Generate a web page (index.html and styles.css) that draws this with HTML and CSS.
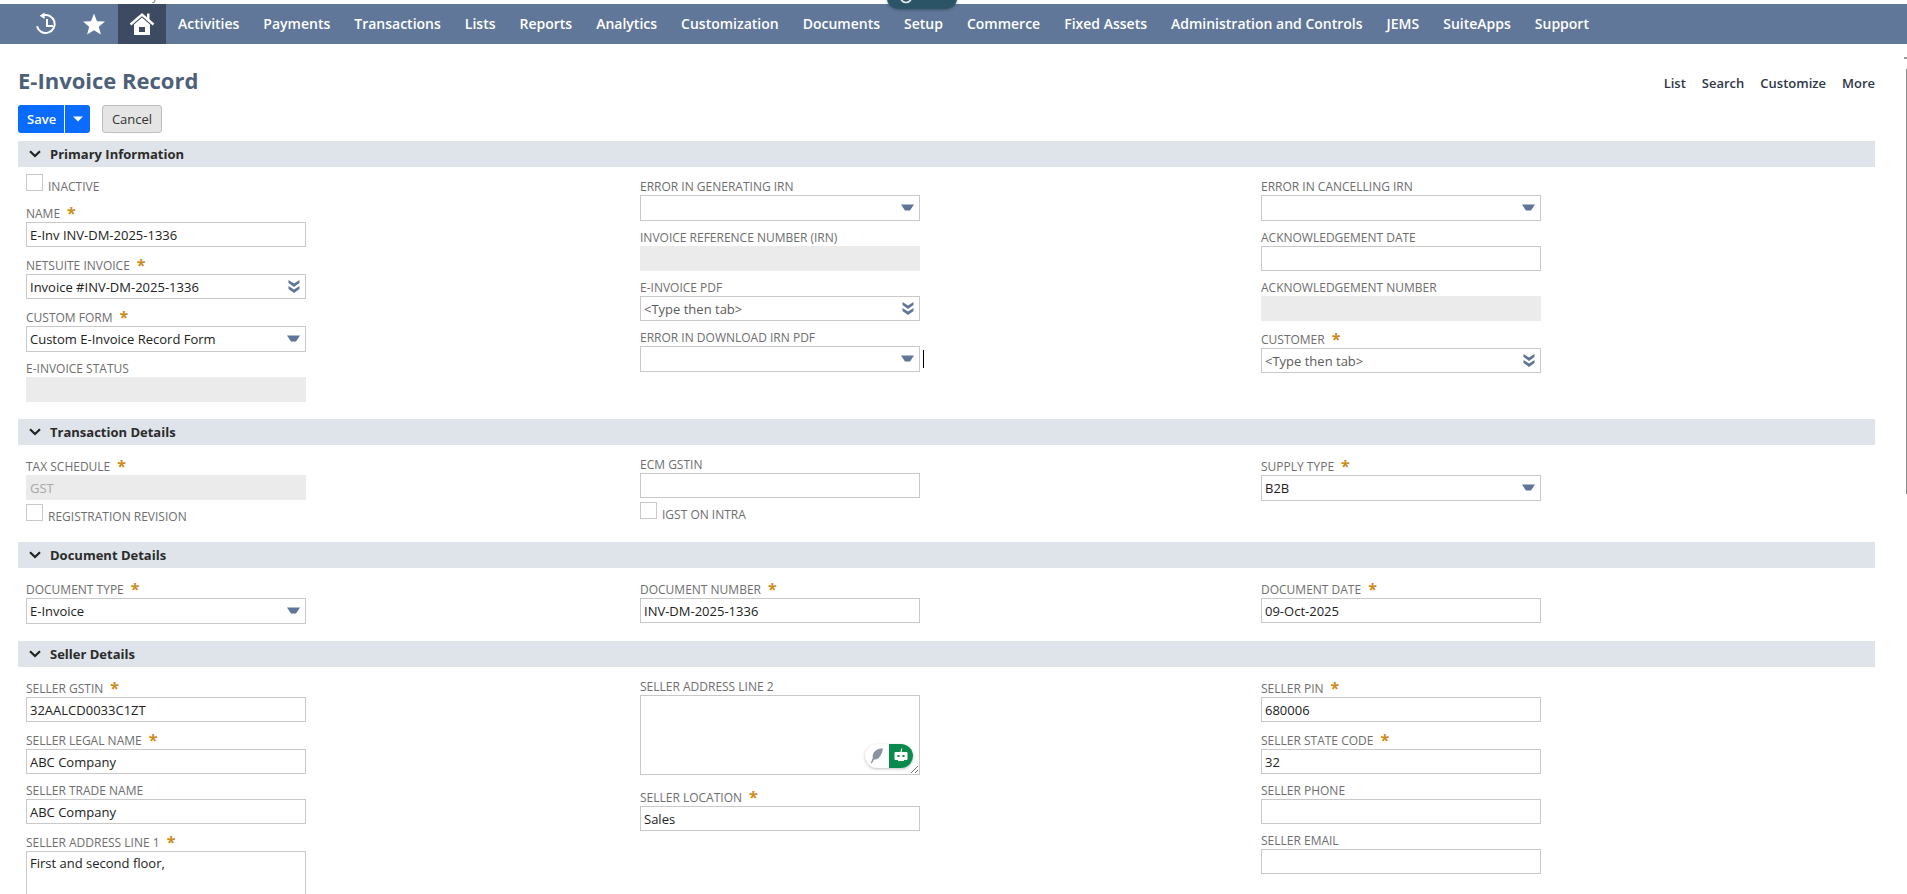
FILE: index.html
```html
<!DOCTYPE html>
<html lang="en">
<head>
<meta charset="utf-8">
<title>E-Invoice Record</title>
<link rel="stylesheet" href="styles.css">
</head>
<body>
<div class="peek-text">Dynamics</div>
<div class="peek-pill">
  <svg class="peek-ring" width="14" height="14" viewBox="0 0 14 14"><circle cx="7" cy="3" r="5.5" fill="none" stroke="#e8eef2" stroke-width="1.6"/></svg>
  <span class="peek-label">AI</span>
</div>
<div class="scroll-tick"></div>
<div class="scroll-thumb"></div>

<nav class="nav">
  <a class="nav-icon">
    <svg width="24" height="24" viewBox="0 0 24 24"><path d="M9 3.4A9 9 0 1 1 3 14.2" fill="none" stroke="#fff" stroke-width="2"/><path d="M10.6 .6V7L5.6 3.8Z" fill="#fff"/><path d="M13 7V14H19" fill="none" stroke="#fff" stroke-width="2"/></svg>
  </a>
  <a class="nav-icon">
    <svg width="24" height="24" viewBox="0 0 24 24"><path d="M12 1.5 15 9.2 23 9.6 16.8 14.8 18.9 22.6 12 18.2 5.1 22.6 7.2 14.8 1 9.6 9 9.2Z" fill="#fff"/></svg>
  </a>
  <a class="nav-icon nav-home">
    <svg width="26" height="24" viewBox="0 0 26 24"><path d="M1.5 12.5 13 2.5 24.5 12.5" fill="none" stroke="#fff" stroke-width="2.4"/><path d="M18 1.5H20.5V8H18Z" fill="#fff"/><path fill-rule="evenodd" d="M13 5.6 21 12.6V23H5V12.6ZM10 15V20H16V15Z" fill="#fff"/></svg>
  </a>
  <a class="nav-link">Activities</a>
  <a class="nav-link">Payments</a>
  <a class="nav-link">Transactions</a>
  <a class="nav-link">Lists</a>
  <a class="nav-link">Reports</a>
  <a class="nav-link">Analytics</a>
  <a class="nav-link">Customization</a>
  <a class="nav-link">Documents</a>
  <a class="nav-link">Setup</a>
  <a class="nav-link">Commerce</a>
  <a class="nav-link">Fixed Assets</a>
  <a class="nav-link">Administration and Controls</a>
  <a class="nav-link">JEMS</a>
  <a class="nav-link">SuiteApps</a>
  <a class="nav-link">Support</a>
</nav>

<header class="head">
  <h1 class="title">E-Invoice Record</h1>
  <div class="links"><a>List</a><a>Search</a><a>Customize</a><a>More</a></div>
</header>

<div class="actions">
  <div class="save">
    <span class="save-main">Save</span>
    <span class="save-arrow"><svg width="10" height="6" viewBox="0 0 10 6"><path d="M0 .5H10L5 5.5Z" fill="#fff"/></svg></span>
  </div>
  <div class="cancel">Cancel</div>
</div>

<section>
  <h2 class="bar"><svg class="chev" width="12" height="8" viewBox="0 0 12 8"><path d="M1 1.2 6 6 11 1.2" fill="none" stroke="#222" stroke-width="2.2"/></svg>Primary Information</h2>
  <div class="grid">
    <div class="col">
      <div class="check"><span class="box"></span><span class="check-text">INACTIVE</span></div>
      <div class="lab req">NAME<b>*</b></div>
      <div class="inp">E-Inv INV-DM-2025-1336</div>
      <div class="lab req">NETSUITE INVOICE<b>*</b></div>
      <div class="inp">Invoice #INV-DM-2025-1336<svg class="dbl" width="12" height="13" viewBox="0 0 12 13"><path d="M.5 0 6 3.5 11.5 0V3L6 7 .5 3ZM.5 6 6 9.5 11.5 6V9L6 13 .5 9Z" fill="#5f7699"/></svg></div>
      <div class="lab req">CUSTOM FORM<b>*</b></div>
      <div class="inp sel">Custom E-Invoice Record Form<svg class="tri" width="13" height="7" viewBox="0 0 13 7"><path d="M0 .5H13L9 6.5H4Z" fill="#5f7699"/></svg></div>
      <div class="lab">E-INVOICE STATUS</div>
      <div class="inp off"></div>
    </div>
    <div class="col">
      <div class="lab">ERROR IN GENERATING IRN</div>
      <div class="inp sel"><svg class="tri" width="13" height="7" viewBox="0 0 13 7"><path d="M0 .5H13L9 6.5H4Z" fill="#5f7699"/></svg></div>
      <div class="lab">INVOICE REFERENCE NUMBER (IRN)</div>
      <div class="inp off"></div>
      <div class="lab">E-INVOICE PDF</div>
      <div class="inp hint">&lt;Type then tab&gt;<svg class="dbl" width="12" height="13" viewBox="0 0 12 13"><path d="M.5 0 6 3.5 11.5 0V3L6 7 .5 3ZM.5 6 6 9.5 11.5 6V9L6 13 .5 9Z" fill="#5f7699"/></svg></div>
      <div class="lab">ERROR IN DOWNLOAD IRN PDF</div>
      <div class="inp sel"><svg class="tri" width="13" height="7" viewBox="0 0 13 7"><path d="M0 .5H13L9 6.5H4Z" fill="#5f7699"/></svg><span class="caret"></span></div>
    </div>
    <div class="col">
      <div class="lab">ERROR IN CANCELLING IRN</div>
      <div class="inp sel"><svg class="tri" width="13" height="7" viewBox="0 0 13 7"><path d="M0 .5H13L9 6.5H4Z" fill="#5f7699"/></svg></div>
      <div class="lab">ACKNOWLEDGEMENT DATE</div>
      <div class="inp"></div>
      <div class="lab">ACKNOWLEDGEMENT NUMBER</div>
      <div class="inp off"></div>
      <div class="lab req">CUSTOMER<b>*</b></div>
      <div class="inp hint">&lt;Type then tab&gt;<svg class="dbl" width="12" height="13" viewBox="0 0 12 13"><path d="M.5 0 6 3.5 11.5 0V3L6 7 .5 3ZM.5 6 6 9.5 11.5 6V9L6 13 .5 9Z" fill="#5f7699"/></svg></div>
    </div>
  </div>
</section>

<section>
  <h2 class="bar"><svg class="chev" width="12" height="8" viewBox="0 0 12 8"><path d="M1 1.2 6 6 11 1.2" fill="none" stroke="#222" stroke-width="2.2"/></svg>Transaction Details</h2>
  <div class="grid">
    <div class="col">
      <div class="lab req">TAX SCHEDULE<b>*</b></div>
      <div class="inp off muted">GST</div>
      <div class="check"><span class="box"></span><span class="check-text">REGISTRATION REVISION</span></div>
    </div>
    <div class="col">
      <div class="lab">ECM GSTIN</div>
      <div class="inp"></div>
      <div class="check"><span class="box"></span><span class="check-text">IGST ON INTRA</span></div>
    </div>
    <div class="col">
      <div class="lab req">SUPPLY TYPE<b>*</b></div>
      <div class="inp sel">B2B<svg class="tri" width="13" height="7" viewBox="0 0 13 7"><path d="M0 .5H13L9 6.5H4Z" fill="#5f7699"/></svg></div>
    </div>
  </div>
</section>

<section>
  <h2 class="bar"><svg class="chev" width="12" height="8" viewBox="0 0 12 8"><path d="M1 1.2 6 6 11 1.2" fill="none" stroke="#222" stroke-width="2.2"/></svg>Document Details</h2>
  <div class="grid">
    <div class="col">
      <div class="lab req">DOCUMENT TYPE<b>*</b></div>
      <div class="inp sel">E-Invoice<svg class="tri" width="13" height="7" viewBox="0 0 13 7"><path d="M0 .5H13L9 6.5H4Z" fill="#5f7699"/></svg></div>
    </div>
    <div class="col">
      <div class="lab req">DOCUMENT NUMBER<b>*</b></div>
      <div class="inp">INV-DM-2025-1336</div>
    </div>
    <div class="col">
      <div class="lab req">DOCUMENT DATE<b>*</b></div>
      <div class="inp">09-Oct-2025</div>
    </div>
  </div>
</section>

<section>
  <h2 class="bar"><svg class="chev" width="12" height="8" viewBox="0 0 12 8"><path d="M1 1.2 6 6 11 1.2" fill="none" stroke="#222" stroke-width="2.2"/></svg>Seller Details</h2>
  <div class="grid">
    <div class="col">
      <div class="lab req">SELLER GSTIN<b>*</b></div>
      <div class="inp">32AALCD0033C1ZT</div>
      <div class="lab req">SELLER LEGAL NAME<b>*</b></div>
      <div class="inp">ABC Company</div>
      <div class="lab">SELLER TRADE NAME</div>
      <div class="inp">ABC Company</div>
      <div class="lab req">SELLER ADDRESS LINE 1<b>*</b></div>
      <div class="inp area">First and second floor,</div>
    </div>
    <div class="col">
      <div class="lab">SELLER ADDRESS LINE 2</div>
      <div class="inp area">
        <div class="toggle">
          <span class="toggle-off"><svg width="14" height="16" viewBox="0 0 14 16"><path d="M13 .6C8.5 .2 3.2 2.6 2.6 8.4L2.8 10 .8 15 1.8 15.6 4 11.4C8.6 12.4 11.6 7.6 13 .6Z" fill="#8b93a3"/></svg></span>
          <span class="toggle-on"><svg width="16" height="16" viewBox="0 0 16 16"><path d="M8.8 .6 8 4.2" stroke="#fff" stroke-width="1.2"/><path fill-rule="evenodd" d="M2.5 4H13.5A1 1 0 0 1 14.5 5V11A1 1 0 0 1 13.5 12H11V13H5V12H2.5A1 1 0 0 1 1.5 11V5A1 1 0 0 1 2.5 4ZM4.5 7V9H6.5V7ZM9.5 7V9H11.5V7Z" fill="#fff"/></svg></span>
        </div>
        <svg class="grip" width="8" height="8" viewBox="0 0 8 8"><path d="M1 8 8 1M5 8 8 5" stroke="#777" stroke-width="1"/></svg>
      </div>
      <div class="lab req after-area">SELLER LOCATION<b>*</b></div>
      <div class="inp">Sales</div>
    </div>
    <div class="col">
      <div class="lab req">SELLER PIN<b>*</b></div>
      <div class="inp">680006</div>
      <div class="lab req">SELLER STATE CODE<b>*</b></div>
      <div class="inp">32</div>
      <div class="lab">SELLER PHONE</div>
      <div class="inp"></div>
      <div class="lab">SELLER EMAIL</div>
      <div class="inp"></div>
    </div>
  </div>
</section>
</body>
</html>
```

FILE: styles.css
```css
* { box-sizing: border-box; }
html, body { margin: 0; height: 894px; overflow: hidden; background: #fff; }
body { padding-top: 4px; font-family: "Open Sans", "Liberation Sans", sans-serif; font-size: 13px; color: #222; }

.peek-text { position: absolute; left: 143px; top: -10px; font-size: 11px; line-height: 12px; letter-spacing: 1px; color: #777; }
.peek-pill { position: absolute; z-index: 2; left: 887px; top: -6px; width: 70px; height: 15px; background: #2b5566; border-radius: 0 0 12px 12px / 0 0 10px 10px; box-shadow: 0 1px 3px rgba(0, 0, 0, .3); overflow: hidden; }
.peek-ring { position: absolute; left: 12px; top: 0; }
.peek-label { position: absolute; left: 38px; top: -7px; font-size: 11px; line-height: 14px; color: #e8eef2; }
.scroll-tick { position: absolute; right: 0; top: 57px; width: 3px; height: 2px; background: #999; }
.scroll-thumb { position: absolute; right: 0; top: 69px; width: 1px; height: 425px; background: #8d8d8d; }

.nav { display: flex; align-items: stretch; height: 40px; padding-left: 22px; background: #607799; }
.nav-icon { display: flex; width: 48px; align-items: center; justify-content: center; }
.nav-home { background: #3c4a62; }
.nav-link { display: flex; align-items: center; padding: 0 12px; color: #fff; font-size: 14px; font-weight: 600; line-height: 20px; white-space: nowrap; }

.head { display: flex; justify-content: space-between; align-items: center; padding: 22px 32px 0 18px; }
.title { margin: 0; font-size: 22px; line-height: 28px; font-weight: 700; color: #4d5f79; }
.links { display: flex; gap: 16px; margin-top: 6px; font-size: 13px; font-weight: 600; line-height: 18px; color: #2d3748; }

.actions { display: flex; gap: 12px; height: 28px; margin: 11px 0 8px 18px; }
.save { display: flex; width: 72px; border-radius: 3px; overflow: hidden; background: #0a6cff; color: #fff; font-weight: 600; line-height: 28px; }
.save-main { width: 47px; padding-left: 9px; border-right: 1px solid #fff; }
.save-arrow { display: flex; flex: 1; align-items: center; justify-content: center; }
.cancel { width: 60px; border: 1px solid #bdbdbd; border-radius: 3px; background: #e5e5e5; color: #333; font-weight: 500; line-height: 26px; text-align: center; }

section { margin: 0 32px 0 18px; }
.bar { display: flex; align-items: center; height: 26px; margin: 0; padding-left: 11px; background: #dfe3ea; font-size: 13px; font-weight: 700; line-height: 18px; color: #2b2b2b; }
.chev { margin-right: 9px; }
.grid { display: grid; grid-template-columns: 614px 621px 1fr; padding: 3px 0 17px 8px; }
.col { display: flex; flex-direction: column; align-items: flex-start; }

.lab { display: flex; align-items: flex-end; height: 25px; font-size: 12px; line-height: 17px; color: #6e6e6e; white-space: nowrap; }
.lab.req { height: 27px; }
.lab.req b { align-self: flex-end; height: 20px; margin-left: 7px; color: #d08a1a; font-size: 16px; line-height: 22px; font-weight: 700; }
.lab.after-area { margin-top: 4px; }

.inp { position: relative; width: 280px; height: 25px; padding-left: 3px; border: 1px solid #c9c9c9; background: #fff; line-height: 25px; white-space: nowrap; color: #222; }
.inp.sel { height: 26px; line-height: 24px; }
.inp.off { border-color: #ebebeb; background: #ebebeb; }
.inp.muted { color: #a8a8a8; }
.inp.hint { color: #5c5c5c; }
.inp.area { height: 80px; line-height: 23px; white-space: normal; }
.dbl { position: absolute; right: 5px; top: 5px; }
.tri { position: absolute; right: 5px; top: 8px; }
.caret { position: absolute; left: 282px; top: 3px; width: 1px; height: 18px; background: #000; }
.grip { position: absolute; right: 1px; bottom: 1px; }

.check { display: flex; height: 25px; padding-top: 4px; }
.box { width: 17px; height: 17px; border: 1px solid #c9c9c9; background: #fff; }
.check-text { margin: 4px 0 0 5px; font-size: 12px; line-height: 17px; color: #6e6e6e; }

.toggle { position: absolute; right: 6px; bottom: 6px; display: flex; width: 48px; height: 24px; border-radius: 12px; overflow: hidden; background: #fff; box-shadow: 0 1px 3px rgba(0, 0, 0, .25); }
.toggle-off, .toggle-on { display: flex; flex: 1; align-items: center; justify-content: center; }
.toggle-on { background: #0a8a4d; }
```
